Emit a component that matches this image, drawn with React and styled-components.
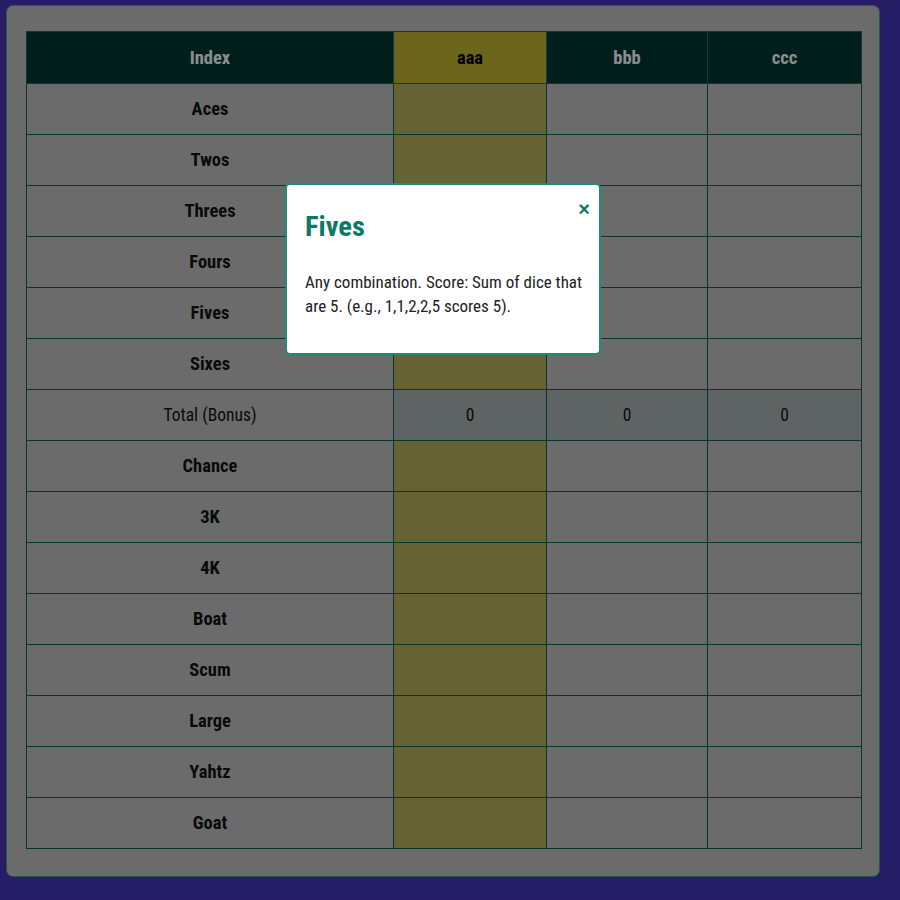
import React from "react";
import styled, { createGlobalStyle } from "styled-components";

const Global = createGlobalStyle`
  html, body { margin: 0; padding: 0; }
  body {
    background: #412faa;
    width: 900px;
    height: 900px;
    overflow: hidden;
    font-family: "Roboto Condensed", Roboto, "Liberation Sans", sans-serif;
    font-stretch: 75%;
  }
`;

const Page = styled.div`
  position: relative;
  width: 900px;
  height: 900px;
  padding: 5px 0 0 6px;
  box-sizing: border-box;
`;

const Card = styled.div`
  width: 874px;
  height: 872px;
  box-sizing: border-box;
  background: #b3b3b3;
  border-radius: 7px;
  border: 1px solid #3f8f80;
  padding: 25px 18px 0 19px;
`;

const Table = styled.table`
  border-collapse: collapse;
  width: 835px;
  table-layout: fixed;
`;

const Th = styled.th`
  height: 51px;
  padding: 0;
  border: 1px solid #0a6a58;
  background: ${(p) => (p.$active ? "#b2aa2f" : "#00352f")};
  color: ${(p) => (p.$active ? "#000" : "#ececec")};
  font-size: 18.5px;
  font-weight: 700;
  text-align: center;
`;

const Td = styled.td`
  height: 50px;
  padding: 0;
  border: 1px solid #0b5a4a;
  text-align: center;
  font-size: ${(p) => (p.$light ? "17.5px" : "18.5px")};
  font-weight: ${(p) => (p.$light ? 400 : 700)};
  color: #111;
  background: ${(p) =>
    p.$total ? "#9da7a7" : p.$active ? "#aca355" : "transparent"};
`;

const Overlay = styled.div`
  position: absolute;
  inset: 0;
  background: rgba(0, 0, 0, 0.4);
`;

const Modal = styled.div`
  position: absolute;
  left: 285px;
  top: 183px;
  width: 316px;
  height: 172px;
  box-sizing: border-box;
  background: #fff;
  border: 2px solid #1f8a76;
  border-radius: 5px;
  padding: 25px 8px 0 18px;
`;

const Title = styled.h2`
  margin: 0;
  font-size: 28.5px;
  font-weight: 700;
  color: #0b7a68;
  line-height: 34px;
`;

const Close = styled.button`
  position: absolute;
  top: 14px;
  right: 9px;
  border: none;
  background: none;
  padding: 0;
  color: #0b7a68;
  font-family: "Liberation Sans", sans-serif;
  font-size: 20px;
  font-weight: 700;
  line-height: 20px;
  cursor: pointer;
`;

const Body = styled.p`
  margin: 26px 0 0;
  font-size: 17px;
  line-height: 24px;
  color: #222;
`;

const players = ["aaa", "bbb", "ccc"];
const rows = [
  "Aces",
  "Twos",
  "Threes",
  "Fours",
  "Fives",
  "Sixes",
  "__total",
  "Chance",
  "3K",
  "4K",
  "Boat",
  "Scum",
  "Large",
  "Yahtz",
  "Goat",
];

export default function App() {
  return (
    <>
      <Global />
      <Page>
        <Card>
          <Table>
            <colgroup>
              <col style={{ width: 367 }} />
              <col style={{ width: 153 }} />
              <col style={{ width: 161 }} />
              <col style={{ width: 154 }} />
            </colgroup>
            <thead>
              <tr>
                <Th>Index</Th>
                {players.map((p, i) => (
                  <Th key={p} $active={i === 0}>
                    {p}
                  </Th>
                ))}
              </tr>
            </thead>
            <tbody>
              {rows.map((r) =>
                r === "__total" ? (
                  <tr key={r}>
                    <Td $light>Total (Bonus)</Td>
                    {players.map((p) => (
                      <Td key={p} $total $light>
                        0
                      </Td>
                    ))}
                  </tr>
                ) : (
                  <tr key={r}>
                    <Td>{r}</Td>
                    {players.map((p, i) => (
                      <Td key={p} $active={i === 0} />
                    ))}
                  </tr>
                )
              )}
            </tbody>
          </Table>
        </Card>
        <Overlay />
        <Modal>
          <Close aria-label="close">×</Close>
          <Title>Fives</Title>
          <Body>
            Any combination. Score: Sum of dice that are 5. (e.g., 1,1,2,2,5
            scores 5).
          </Body>
        </Modal>
      </Page>
    </>
  );
}
